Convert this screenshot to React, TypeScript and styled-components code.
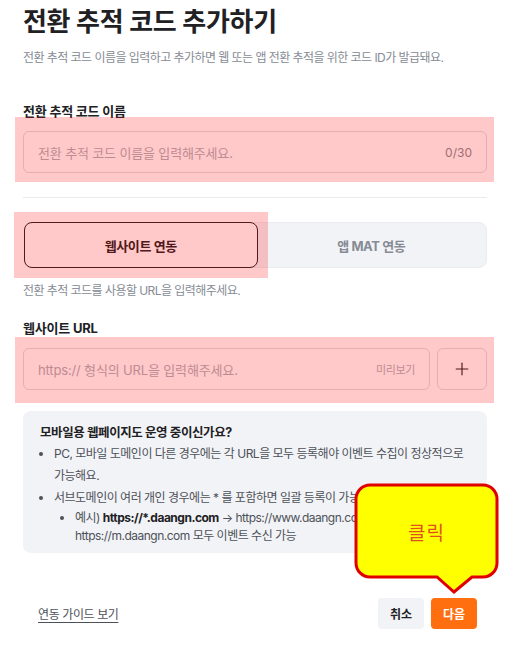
import styled, { createGlobalStyle } from "styled-components";
import { Plus } from "lucide-react";

const GlobalStyle = createGlobalStyle`
  body {
    margin: 0;
    background: #ffffff;
    font-family: "Inter", "Noto Sans CJK KR", sans-serif;
    color: #212124;
    letter-spacing: -0.4px;
  }
`;

export default function App() {
  return (
    <>
      <GlobalStyle />
      <Page>
        <Title>전환 추적 코드 추가하기</Title>
        <Subtitle>
          전환 추적 코드 이름을 입력하고 추가하면 웹 또는 앱 전환 추적을 위한 코드 ID가 발급돼요.
        </Subtitle>

        <Label $top={34}>전환 추적 코드 이름</Label>
        <Field>
          <InputBox>
            <Placeholder>전환 추적 코드 이름을 입력해주세요.</Placeholder>
            <Counter>0/30</Counter>
          </InputBox>
          <Highlight $top={-14} $right={-7} $bottom={-9} $left={-8} />
        </Field>

        <Divider />

        <Field>
          <Tabs>
            <Tab $active>웹사이트 연동</Tab>
            <Tab>앱 MAT 연동</Tab>
          </Tabs>
          <Highlight $top={-10} $right={219} $bottom={-10} $left={-9} />
        </Field>
        <Helper>전환 추적 코드를 사용할 URL을 입력해주세요.</Helper>

        <Label $top={18}>웹사이트 URL</Label>
        <Field>
          <UrlRow>
            <InputBox $grow>
              <Placeholder>https:// 형식의 URL을 입력해주세요.</Placeholder>
              <Preview>미리보기</Preview>
            </InputBox>
            <AddButton>
              <Plus size={20} strokeWidth={1.4} />
            </AddButton>
          </UrlRow>
          <Highlight $top={-11} $right={-7} $bottom={-13} $left={-8} />
        </Field>

        <InfoBox>
          <InfoTitle>모바일용 웹페이지도 운영 중이신가요?</InfoTitle>
          <InfoList>
            <li>
              PC, 모바일 도메인이 다른 경우에는 각 URL을 모두 등록해야 이벤트 수집이 정상적으로
              <br />
              가능해요.
            </li>
            <li>
              <NoWrap>서브도메인이 여러 개인 경우에는 * 를 포함하면 일괄 등록이 가능해요.</NoWrap>
              <SubList>
                <li>
                  예시) <b>https://*.daangn.com</b> → https://www.daangn.com,
                  <br />
                  https://m.daangn.com 모두 이벤트 수신 가능
                </li>
              </SubList>
            </li>
          </InfoList>
        </InfoBox>

        <Footer>
          <GuideLink>연동 가이드 보기</GuideLink>
          <Actions>
            <Button>취소</Button>
            <Button $primary>다음</Button>
          </Actions>
        </Footer>

        <Callout>
          <svg width="145" height="112" viewBox="0 0 145 112">
            <path
              d="M16 2 H129 A14 14 0 0 1 143 16 V80 A14 14 0 0 1 129 94 H118 L100 109 L83 94 H16 A14 14 0 0 1 2 80 V16 A14 14 0 0 1 16 2 Z"
              fill="#ffff00"
              stroke="#e00000"
              strokeWidth="3"
            />
          </svg>
          <CalloutText>클릭</CalloutText>
        </Callout>
      </Page>
    </>
  );
}

//>>>>StyledComponents<<<<\\

const Page = styled.div`
  position: relative;
  width: 464px;
  margin-left: 23px;
  padding-top: 4px;
  padding-bottom: 20px;
`;

const Title = styled.h1`
  margin: 0;
  font-size: 26px;
  line-height: 36px;
  font-weight: 700;
  letter-spacing: -0.3px;
  color: #212124;
`;

const Subtitle = styled.p`
  margin: 9px 0 0;
  font-size: 12px;
  line-height: 18px;
  letter-spacing: -0.55px;
  color: #868b94;
`;

const Label = styled.div<{ $top: number }>`
  margin-top: ${(p) => p.$top}px;
  margin-bottom: 10px;
  font-size: 13px;
  line-height: 20px;
  font-weight: 700;
  letter-spacing: -0.2px;
  color: #212124;
`;

const Field = styled.div`
  position: relative;
`;

const Highlight = styled.div<{
  $top: number;
  $right: number;
  $bottom: number;
  $left: number;
}>`
  position: absolute;
  top: ${(p) => p.$top}px;
  right: ${(p) => p.$right}px;
  bottom: ${(p) => p.$bottom}px;
  left: ${(p) => p.$left}px;
  background: rgba(255, 0, 0, 0.21);
  pointer-events: none;
`;

const InputBox = styled.div<{ $grow?: boolean }>`
  box-sizing: border-box;
  height: 42px;
  display: flex;
  align-items: center;
  justify-content: space-between;
  padding: 0 14px;
  border: 1px solid #dcdee3;
  border-radius: 6px;
  background: #ffffff;
  flex: ${(p) => (p.$grow ? 1 : "none")};
`;

const Placeholder = styled.span`
  font-size: 13px;
  letter-spacing: -0.15px;
  color: #adb1ba;
`;

const Counter = styled.span`
  font-size: 12px;
  letter-spacing: 0;
  color: #868b94;
`;

const Preview = styled.span`
  font-size: 11px;
  color: #adb1ba;
`;

const Divider = styled.hr`
  margin: 24px 0;
  border: none;
  border-top: 1px solid #eaebee;
`;

const Tabs = styled.div`
  display: flex;
  height: 46px;
  box-sizing: border-box;
  margin-left: 1px;
  background: #f2f3f6;
  border: 1px solid #eaebee;
  border-radius: 8px;
`;

const Tab = styled.div<{ $active?: boolean }>`
  flex: 1;
  display: flex;
  align-items: center;
  justify-content: center;
  margin: -1px;
  font-size: 13px;
  font-weight: 700;
  border-radius: 8px;
  color: ${(p) => (p.$active ? "#212124" : "#868b94")};
  background: ${(p) => (p.$active ? "#ffffff" : "transparent")};
  border: ${(p) => (p.$active ? "1.5px solid #212124" : "none")};
`;

const Helper = styled.p`
  margin: 14px 0 0;
  font-size: 12px;
  line-height: 18px;
  letter-spacing: -0.55px;
  color: #868b94;
`;

const UrlRow = styled.div`
  display: flex;
  gap: 7px;
`;

const AddButton = styled.div`
  box-sizing: border-box;
  width: 50px;
  height: 42px;
  display: flex;
  align-items: center;
  justify-content: center;
  border: 1px solid #dcdee3;
  border-radius: 6px;
  color: #212124;
`;

const InfoBox = styled.div`
  margin-top: 21px;
  padding: 12px 17px 8px;
  background: #f2f3f6;
  border-radius: 8px;
  font-size: 12px;
  letter-spacing: -0.5px;
  color: #4d5159;
`;

const InfoTitle = styled.div`
  font-size: 12.5px;
  line-height: 20px;
  font-weight: 700;
  letter-spacing: -0.4px;
  color: #212124;
`;

const InfoList = styled.ul`
  margin: 0;
  padding-left: 14px;
  line-height: 22px;
  list-style: disc;
`;

const NoWrap = styled.span`
  white-space: nowrap;
`;

const SubList = styled.ul`
  margin: 0;
  padding-left: 21px;
  line-height: 18px;
  list-style: disc;

  b {
    color: #212124;
    font-weight: 700;
  }
`;

const Footer = styled.div`
  margin-top: 45px;
  padding: 0 10px 0 15px;
  display: flex;
  align-items: center;
  justify-content: space-between;
`;

const GuideLink = styled.a`
  font-size: 12px;
  color: #4d5159;
  text-decoration: underline;
  text-underline-offset: 3px;
`;

const Actions = styled.div`
  display: flex;
  gap: 7px;
`;

const Button = styled.button<{ $primary?: boolean }>`
  width: 46px;
  height: 31px;
  border: none;
  border-radius: 4px;
  font-family: inherit;
  font-size: 12px;
  font-weight: 700;
  color: ${(p) => (p.$primary ? "#ffffff" : "#212124")};
  background: ${(p) => (p.$primary ? "#ff6f0f" : "#f2f3f6")};
`;

const Callout = styled.div`
  position: absolute;
  left: 331px;
  top: 483px;
  width: 145px;
  height: 112px;

  svg {
    display: block;
  }
`;

const CalloutText = styled.span`
  position: absolute;
  left: 2px;
  top: 2px;
  width: 141px;
  height: 92px;
  display: flex;
  align-items: center;
  justify-content: center;
  font-size: 19px;
  letter-spacing: 1px;
  color: #e0501a;
`;
